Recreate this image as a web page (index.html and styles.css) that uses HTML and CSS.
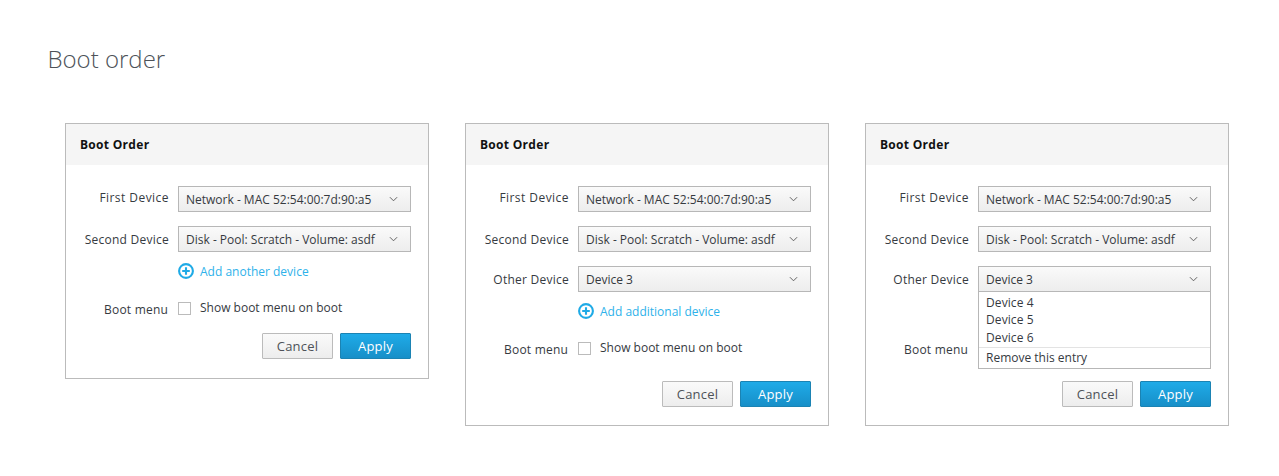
FILE: index.html
```html
<!DOCTYPE html>
<html lang="en">
<head>
<meta charset="utf-8">
<title>Boot order</title>
<link rel="stylesheet" href="styles.css">
</head>
<body>
<h1 class="page-title">Boot order</h1>
<main class="cards">

<section class="card">
  <h2 class="card-head">Boot Order</h2>
  <div class="card-body">
    <div class="row"><span class="label label-first">First Device</span><div class="select"><span>Network - MAC 52:54:00:7d:90:a5</span><svg class="chev" viewBox="0 0 10 6"><path d="M1 1l4 4 4-4"/></svg></div></div>
    <div class="row"><span class="label">Second Device</span><div class="select"><span>Disk - Pool: Scratch - Volume: asdf</span><svg class="chev" viewBox="0 0 10 6"><path d="M1 1l4 4 4-4"/></svg></div></div>
    <div class="add"><svg class="plus" viewBox="0 0 16 16"><circle cx="8" cy="8" r="6.9"/><path d="M8 4.2v7.6M4.2 8h7.6"/></svg><span>Add another device</span></div>
    <div class="row boot"><span class="label label-boot">Boot menu</span><span class="check"></span><span class="check-text">Show boot menu on boot</span></div>
    <div class="actions"><button class="btn">Cancel</button><button class="btn primary">Apply</button></div>
  </div>
</section>

<section class="card">
  <h2 class="card-head">Boot Order</h2>
  <div class="card-body">
    <div class="row"><span class="label label-first">First Device</span><div class="select"><span>Network - MAC 52:54:00:7d:90:a5</span><svg class="chev" viewBox="0 0 10 6"><path d="M1 1l4 4 4-4"/></svg></div></div>
    <div class="row"><span class="label">Second Device</span><div class="select"><span>Disk - Pool: Scratch - Volume: asdf</span><svg class="chev" viewBox="0 0 10 6"><path d="M1 1l4 4 4-4"/></svg></div></div>
    <div class="row"><span class="label">Other Device</span><div class="select"><span>Device 3</span><svg class="chev" viewBox="0 0 10 6"><path d="M1 1l4 4 4-4"/></svg></div></div>
    <div class="add"><svg class="plus" viewBox="0 0 16 16"><circle cx="8" cy="8" r="6.9"/><path d="M8 4.2v7.6M4.2 8h7.6"/></svg><span>Add additional device</span></div>
    <div class="row boot"><span class="label label-boot">Boot menu</span><span class="check"></span><span class="check-text">Show boot menu on boot</span></div>
    <div class="actions actions-tall"><button class="btn">Cancel</button><button class="btn primary">Apply</button></div>
  </div>
</section>

<section class="card">
  <h2 class="card-head">Boot Order</h2>
  <div class="card-body">
    <div class="row"><span class="label label-first">First Device</span><div class="select"><span>Network - MAC 52:54:00:7d:90:a5</span><svg class="chev" viewBox="0 0 10 6"><path d="M1 1l4 4 4-4"/></svg></div></div>
    <div class="row"><span class="label">Second Device</span><div class="select"><span>Disk - Pool: Scratch - Volume: asdf</span><svg class="chev" viewBox="0 0 10 6"><path d="M1 1l4 4 4-4"/></svg></div></div>
    <div class="row"><span class="label">Other Device</span>
      <div class="select open"><span>Device 3</span><svg class="chev" viewBox="0 0 10 6"><path d="M1 1l4 4 4-4"/></svg>
        <ul class="menu">
          <li>Device 4</li>
          <li>Device 5</li>
          <li>Device 6</li>
          <li class="menu-last">Remove this entry</li>
        </ul>
      </div>
    </div>
    <div class="add"></div>
    <div class="row boot"><span class="label label-boot">Boot menu</span></div>
    <div class="actions actions-tall"><button class="btn">Cancel</button><button class="btn primary">Apply</button></div>
  </div>
</section>

</main>
</body>
</html>
```
FILE: styles.css
```css
* { box-sizing: border-box; }
html, body { margin: 0; padding: 0; background: #fff; }
body {
  width: 1279px;
  height: 476px;
  overflow: hidden;
  font-family: "Open Sans", "Liberation Sans", sans-serif;
  font-size: 12px;
  color: #363a3f;
}
.page-title {
  margin: 0;
  padding: 42px 0 0 47.5px;
  height: 123px;
  font-size: 24px;
  line-height: 33px;
  font-weight: 300;
  color: #4d5258;
}
.cards {
  display: flex;
  align-items: flex-start;
  gap: 36px;
  padding-left: 65px;
}
.card {
  width: 364px;
  border: 1px solid #bbb;
  background: #fff;
}
.card-head {
  margin: 0;
  height: 41px;
  padding: 0 14px;
  background: #f5f5f5;
  font-size: 12px;
  line-height: 41px;
  font-weight: 700;
  letter-spacing: 0.3px;
  color: #111;
}
.card-body { padding: 21px 17px 19px 0; }
.row {
  display: flex;
  align-items: center;
  height: 26px;
  margin-bottom: 14px;
}
.label {
  width: 103px;
  margin-right: 9px;
  text-align: right;
  letter-spacing: 0.25px;
  white-space: nowrap;
}
.label-first {
  padding-bottom: 3px;
  letter-spacing: 0.45px;
}
.select {
  position: relative;
  display: flex;
  align-items: center;
  justify-content: space-between;
  width: 233px;
  height: 26px;
  padding: 0 12px 0 7px;
  border: 1px solid #b7b7b7;
  background: linear-gradient(#fafafa, #ededed);
  white-space: nowrap;
}
.chev {
  width: 9px;
  height: 6px;
  flex: none;
  fill: none;
  stroke: #555;
  stroke-width: 1;
}
.add {
  display: flex;
  align-items: center;
  height: 16px;
  margin: -3px 0 21px 112px;
  color: #2eb2ea;
}
.plus {
  width: 16px;
  height: 16px;
  margin-right: 6px;
  fill: none;
  stroke: #1eaae6;
  stroke-width: 2.1;
}
.boot {
  height: 16px;
  margin-bottom: 0;
}
.label-boot {
  padding: 2px 1px 0 0;
  letter-spacing: 0.2px;
}
.check {
  width: 13px;
  height: 13px;
  margin-right: 9px;
  border: 1px solid #bbb;
  background: #fff;
  flex: none;
  margin-top: 1px;
}
.check-text { padding-bottom: 1px; }
.actions {
  display: flex;
  justify-content: flex-end;
  gap: 7px;
  margin-top: 17px;
}
.actions-tall {
  margin-top: 25px;
  margin-bottom: -1px;
}
.btn {
  width: 71px;
  height: 26px;
  padding: 0;
  border: 1px solid #bbb;
  border-radius: 1px;
  background: linear-gradient(#fafafa, #ededed);
  font: inherit;
  font-size: 13px;
  letter-spacing: 0.2px;
  color: #4d5258;
}
.primary {
  border-color: #1b83b3;
  background: linear-gradient(#1fabe8, #178fc8);
  color: #fff;
}
.menu {
  position: absolute;
  top: 24px;
  left: -1px;
  width: 233px;
  margin: 0;
  padding: 1.5px 0 0;
  list-style: none;
  border: 1px solid #b7b7b7;
  background: #fff;
  z-index: 2;
}
.menu li {
  height: 17.5px;
  line-height: 17.5px;
  padding-left: 7px;
  letter-spacing: 0.1px;
}
.menu .menu-last {
  height: 21px;
  line-height: 19px;
  margin-top: 0.5px;
  border-top: 1px solid #e3e3e3;
  letter-spacing: 0;
}
```
